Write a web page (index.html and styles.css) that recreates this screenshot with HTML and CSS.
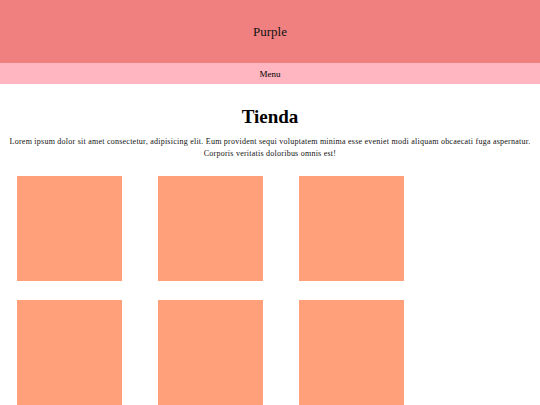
FILE: index.html
```html
<!DOCTYPE html>
<html lang="es">
<head>
<meta charset="utf-8">
<title>Purple</title>
<link rel="stylesheet" href="styles.css">
</head>
<body>
<header class="site-header">
  <div class="brand">Purple</div>
</header>
<nav class="site-nav">Menu</nav>
<main class="content">
  <h1 class="title">Tienda</h1>
  <p class="intro">Lorem ipsum dolor sit amet consectetur, adipisicing elit. Eum provident sequi voluptatem minima esse eveniet modi aliquam obcaecati fuga aspernatur. Corporis veritatis doloribus omnis est!</p>
  <div class="grid">
    <div class="item"></div>
    <div class="item"></div>
    <div class="item"></div>
    <div class="item"></div>
    <div class="item"></div>
    <div class="item"></div>
  </div>
</main>
</body>
</html>
```
FILE: styles.css
```css
html, body {
  margin: 0;
  padding: 0;
  background: #fff;
  font-family: "Liberation Serif", "Times New Roman", serif;
  color: #000;
}
.site-header {
  height: 63px;
  background: #f08080;
  display: flex;
  align-items: center;
  justify-content: center;
}
.brand {
  font-size: 13px;
  color: #111;
}
.site-nav {
  height: 21px;
  background: #ffb6c1;
  display: flex;
  align-items: center;
  justify-content: center;
  font-size: 9px;
}
.content {
  padding: 0 8px;
}
.title {
  margin: 22px 0 0;
  font-size: 19px;
  line-height: 22px;
  text-align: center;
  font-weight: bold;
}
.intro {
  margin: 8px 0 0;
  font-size: 8px;
  line-height: 12px;
  letter-spacing: 0.24px;
  text-align: center;
  color: #111;
}
.grid {
  display: grid;
  grid-template-columns: repeat(3, 105px);
  column-gap: 36px;
  row-gap: 19px;
  padding: 16px 0 0 9px;
}
.item {
  height: 105px;
  background: #ffa07a;
}
```
